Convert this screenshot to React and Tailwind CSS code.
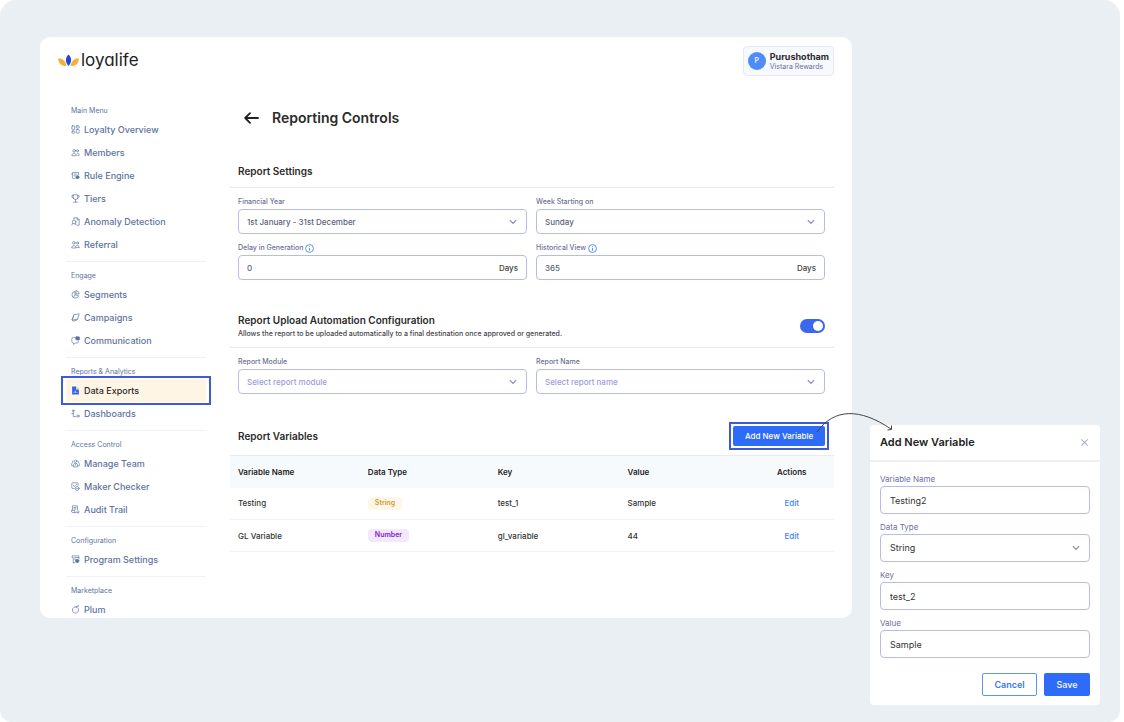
import { useState } from "react";

const ICONS = {
  overview: (
    <>
      <rect x="1.5" y="1.5" width="5" height="7" rx="1" />
      <rect x="9.5" y="1.5" width="5" height="4" rx="1" />
      <rect x="1.5" y="11" width="5" height="3.5" rx="1" />
      <rect x="9.5" y="8" width="5" height="6.5" rx="1" />
    </>
  ),
  members: (
    <>
      <circle cx="5.5" cy="5" r="2.3" />
      <circle cx="11.5" cy="5" r="1.8" />
      <path d="M1.5 13c0-5 8-5 8 0zM11 9.2c2.4-.2 3.5 1.4 3.5 3.8H12" />
    </>
  ),
  rule: (
    <>
      <path d="M7 13.5H4.5a2 2 0 0 1-2-2v-9h11V7M2.5 5.5H1M5.500 5.500h5M5.500 8.500H8" />
      <circle cx="11.5" cy="11" r="2.8" fill="currentColor" />
    </>
  ),
  tiers: (
    <path d="M4 1.5h8V6a4 4 0 0 1-8 0zM4 3H1.500c0 3 1 4.500 3 5M12 3h2.500c0 3-1 4.500-3 5M8 10v4M4.500 14.500h7" />
  ),
  anomaly: (
    <>
      <path d="M5 4V1.500h6L14.500 5v9.500H11M11 1.500V5h3.500" />
      <circle cx="5.5" cy="9" r="3.3" />
      <path d="M3.200 11.500 1 14.500M7 11.500l2 3" />
    </>
  ),
  referral: (
    <>
      <circle cx="5" cy="5" r="2.2" />
      <circle cx="11.5" cy="5.5" r="1.8" />
      <path d="M1.200 13.500c0-5 7.600-5 7.600 0zM9.500 10.500c2-2 5-.5 5 2M10 13.500h4.500" />
    </>
  ),
  segments: (
    <>
      <path d="M7 2.500a6 6 0 1 0 6.500 7.500l-6-1.500z" />
      <path d="M9.500 1.200a5.500 5.500 0 0 1 5 6l-5-.7zM7.500 8.500l-3 4.500" />
    </>
  ),
  campaigns: <path d="M5.500 3 14.500 1.500 11.500 11 3 12.500zM5 5 1.500 12l2 2.500 6.500-1.500 1.500-2" />,
  communication: (
    <>
      <path d="M7 2.500H4.500a3 3 0 0 0-3 3v4a3 3 0 0 0 3 3V15l3-2.500h3a3 3 0 0 0 3-3" />
      <rect x="8.5" y="1.5" width="6.5" height="5.5" rx="1" fill="currentColor" />
    </>
  ),
  dashboards: (
    <>
      <circle cx="4" cy="3" r="1.5" />
      <path d="M4 5v8.500h5M1.500 8H4" />
      <circle cx="12.5" cy="12.5" r="2" />
    </>
  ),
  team: (
    <>
      <circle cx="8" cy="4" r="2.2" />
      <path d="M4.500 13.500v-4c0-2.500 7-2.500 7 0v4zM4 3.500C2.500 3.500 2 5 3 6.200 1 7 1 9 1.200 12H3M12 3.500c1.500 0 2 1.500 1 2.700 2 .8 2 2.800 1.800 5.800H13M8 9v2.500" />
    </>
  ),
  maker: (
    <>
      <path d="M5.500 11.500h-3a1 1 0 0 1-1-1v-8a1 1 0 0 1 1-1h9a1 1 0 0 1 1 1V6M4 6l2 2 4-4" />
      <circle cx="11" cy="11.5" r="3.5" />
      <path d="m9.500 11.500 1.200 1.200 2-2.200" />
    </>
  ),
  audit: (
    <path d="M2.500 9V1.500h9V8M1 9.500h5.500v4H3a2 2 0 0 1-2-2zM6.500 13.500h3M5 4.500h4M5 7h4M10 12l2.500 2.500L15 12M12.500 14V9.500" />
  ),
  settings: (
    <>
      <path d="M4 14V4.500H2v-3h12v3M7 13.500H4.500M6.500 4.500H14V7M6 7.500h2" />
      <circle cx="11" cy="10.5" r="3" fill="currentColor" />
    </>
  ),
  plum: (
    <>
      <path d="M9.500 3.500A5.600 5.600 0 1 0 12.800 6" />
      <path d="M9.500 3.500c.5-1.800 2-2.500 4-2.200-.2 2-1.500 3-4 2.200z" />
    </>
  ),
};

const MENU = [
  {
    title: "Main Menu",
    items: [
      ["Loyalty Overview", "overview"],
      ["Members", "members"],
      ["Rule Engine", "rule"],
      ["Tiers", "tiers"],
      ["Anomaly Detection", "anomaly"],
      ["Referral", "referral"],
    ],
  },
  {
    title: "Engage",
    items: [
      ["Segments", "segments"],
      ["Campaigns", "campaigns"],
      ["Communication", "communication"],
    ],
  },
  {
    title: "Reports & Analytics",
    items: [
      ["Data Exports", "exports"],
      ["Dashboards", "dashboards"],
    ],
  },
  {
    title: "Access Control",
    items: [
      ["Manage Team", "team"],
      ["Maker Checker", "maker"],
      ["Audit Trail", "audit"],
    ],
  },
  { title: "Configuration", items: [["Program Settings", "settings"]] },
  { title: "Marketplace", items: [["Plum", "plum"]] },
];

const VARIABLES = [
  { name: "Testing", type: "String", key: "test_1", value: "Sample" },
  { name: "GL Variable", type: "Number", key: "gl_variable", value: "44" },
];

const ACTIVE = "Data Exports";

function MenuIcon({ name }) {
  if (name === "exports") {
    return (
      <svg viewBox="0 0 16 16" className="size-[9px] shrink-0" aria-hidden="true">
        <path d="M2 1h7v5h5v9H2z" fill="#2f62f0" />
        <path d="M10 1l4 4h-4z" fill="#f5b544" />
        <path d="M5.500 12.500v-3M8 12.500V8M10.500 12.500v-2" stroke="#fff" />
      </svg>
    );
  }
  return (
    <svg
      viewBox="0 0 16 16"
      className="size-[9px] shrink-0"
      fill="none"
      stroke="currentColor"
      strokeWidth="1.2"
      strokeLinecap="round"
      strokeLinejoin="round"
      aria-hidden="true"
    >
      {ICONS[name]}
    </svg>
  );
}

function Logo() {
  return (
    <div className="flex items-center gap-0.5">
      <svg viewBox="0 0 42 26" className="h-[13px] w-[21px]" aria-hidden="true">
        <path d="M0 9c8-1 15 3 17 15C8 25 1 20 0 9z" fill="#f6b13c" />
        <path d="M42 9c-8-1-15 3-17 15 10 1 16-4 17-15z" fill="#f6b13c" />
        <path d="M21 1c7 7 7 15 0 23-7-8-7-16 0-23z" fill="#2546d2" />
      </svg>
      <span className="text-[17px] leading-5 text-[#222] [font-feature-settings:'cv11']">loyalife</span>
    </div>
  );
}

function Chevron() {
  return (
    <svg
      viewBox="0 0 8 6"
      className="pointer-events-none absolute right-[10px] top-1/2 h-[6px] w-[8px] -translate-y-1/2"
      fill="none"
      stroke="#8d91c4"
      strokeWidth="1.2"
      strokeLinecap="round"
      aria-hidden="true"
    >
      <path d="M1.200 1.500 4 4.300l2.800-2.800" />
    </svg>
  );
}

function InfoIcon() {
  return (
    <svg viewBox="0 0 16 16" className="size-[9px]" fill="none" stroke="#3b82f6" strokeWidth="1.5" aria-hidden="true">
      <circle cx="8" cy="8" r="7" />
      <path d="M8 7v5M8 4v1.500" />
    </svg>
  );
}

function Field({ id, label, info, large, options, placeholder, suffix, value }) {
  const box = `block w-full appearance-none rounded-[4px] border border-[#b9bce2] bg-white outline-none ${
    large ? "h-7 px-[9px] text-[9px] text-[#333]" : "h-[25px] px-2 text-[8px] font-medium"
  } ${placeholder ? "text-[#9a9ddb]" : large ? "" : "text-[#5b5f7d]"}`;

  return (
    <div>
      <label
        htmlFor={id}
        className={`mb-px flex h-3 items-center gap-0.5 ${
          large ? "text-[8px] text-[#6c6fa5]" : "text-[7px] font-medium text-[#6d7092]"
        }`}
      >
        {label}
        {info && <InfoIcon />}
      </label>
      <div className="relative">
        {options ? (
          <>
            <select id={id} className={box}>
              {options.map((o) => (
                <option key={o}>{o}</option>
              ))}
            </select>
            <Chevron />
          </>
        ) : (
          <input id={id} type="text" defaultValue={value} className={box} />
        )}
        {suffix && (
          <span className="pointer-events-none absolute inset-y-0 right-[9px] flex items-center text-[8px] font-medium text-[#444]">
            {suffix}
          </span>
        )}
      </div>
    </div>
  );
}

function Sidebar() {
  return (
    <nav className="-mb-[3px] ml-[26px] w-[140px] shrink-0 pt-[29px] text-[#5e73a0]">
      {MENU.map((section) => (
        <section key={section.title} className="border-b border-[#eff1f5] pb-[5px] pt-2 first:pt-0 last:border-0 last:pb-0">
          <h3 className="flex h-[13px] items-center pl-[5px] text-[7px]">{section.title}</h3>
          <ul>
            {section.items.map(([label, icon]) => (
              <li key={label} className="relative">
                <a
                  href="#"
                  className={`flex h-[23px] items-center gap-1 pl-[5px] text-[9px] font-medium ${
                    label === ACTIVE ? "bg-[#fff5e5] text-[#2b2b2b]" : ""
                  }`}
                >
                  <MenuIcon name={icon} />
                  {label}
                </a>
                {label === ACTIVE && (
                  <span className="pointer-events-none absolute -inset-x-[5px] -inset-y-[3px] border-2 border-[#3d5ad9]" />
                )}
              </li>
            ))}
          </ul>
        </section>
      ))}
    </nav>
  );
}

function VariablesTable() {
  return (
    <table className="w-full table-fixed text-left text-[8px] font-medium text-[#333]">
      <thead className="bg-[#f6fafd]">
        <tr className="h-8 border-t border-[#e6ebf1] text-[#222]">
          <th className="w-[21.5%] px-2 font-semibold">Variable Name</th>
          <th className="w-[21.5%] px-2 font-semibold">Data Type</th>
          <th className="w-[21.5%] px-2 font-semibold">Key</th>
          <th className="w-[21.5%] px-2 font-semibold">Value</th>
          <th className="text-center font-semibold">Actions</th>
        </tr>
      </thead>
      <tbody>
        {VARIABLES.map((v) => (
          <tr key={v.key} className="h-8 border-b border-[#eff3f8]">
            <td className="px-2">{v.name}</td>
            <td className="px-2">
              <span
                className={`flex h-[13px] w-fit items-center rounded-[4px] px-[7px] text-[7px] font-semibold ${
                  v.type === "String" ? "bg-[#fef6e6] text-[#d09a34]" : "bg-[#f3e8ff] text-[#7e22ce]"
                }`}
              >
                {v.type}
              </span>
            </td>
            <td className="px-2">{v.key}</td>
            <td className="px-2">{v.value}</td>
            <td className="text-center">
              <a href="#" className="text-[#3b82f6]">
                Edit
              </a>
            </td>
          </tr>
        ))}
      </tbody>
    </table>
  );
}

function AddVariableDialog() {
  return (
    <div className="relative w-[230px] shrink-0 self-end">
      <form className="rounded-[4px] bg-white">
        <div className="flex h-[37px] items-center justify-between border-b-2 border-[#eff0f6] px-[10px]">
          <h2 className="text-[11px] font-semibold text-[#222]">Add New Variable</h2>
          <button type="button" aria-label="Close" className="mr-px">
            <svg viewBox="0 0 10 10" className="size-[9px]" fill="none" stroke="#a9acdc" strokeWidth="1.2" aria-hidden="true">
              <path d="m1.500 1.500 7 7M8.500 1.500l-7 7" />
            </svg>
          </button>
        </div>
        <div className="flex flex-col gap-[7px] px-[10px] pt-[11px]">
          <Field large id="new-name" label="Variable Name" value="Testing2" />
          <Field large id="new-type" label="Data Type" options={["String", "Number"]} />
          <Field large id="new-key" label="Key" value="test_2" />
          <Field large id="new-value" label="Value" value="Sample" />
        </div>
        <div className="flex justify-end gap-[7px] px-[10px] pb-[9px] pt-[15px] text-[9px] font-medium">
          <button type="button" className="h-[23px] w-[55px] rounded-[2px] border border-[#5b93fb] font-semibold text-[#3b78f6]">
            Cancel
          </button>
          <button type="button" className="h-[23px] w-[46px] rounded-[2px] bg-[#2e6bf8] text-white">
            Save
          </button>
        </div>
      </form>
      {/* connector from the button to this dialog */}
      <svg
        viewBox="0 0 78 22"
        className="pointer-events-none absolute -left-[54px] -top-[13px] h-[22px] w-[78px]"
        fill="none"
        stroke="#444"
        aria-hidden="true"
      >
        <path d="M1 20C18-4 44-4 75 17M75.500 13.500v4l-4 .5" />
      </svg>
    </div>
  );
}

export default function App() {
  const [autoUpload, setAutoUpload] = useState(true);

  return (
    <div className="min-h-screen bg-white pr-1 font-['Inter',sans-serif]">
      <div className="flex min-h-screen items-start gap-[18px] rounded-b-[12px] rounded-t-[16px] bg-[#e9eff2] pb-[17px] pl-10 pr-5 pt-[37px]">
        <div className="min-w-0 flex-1 overflow-hidden rounded-[10px] bg-white">
          <header className="flex items-start justify-between px-[18px] pt-[9px]">
            <div className="pt-1">
              <Logo />
            </div>
            <div className="flex h-[30px] items-center gap-1 rounded-[4px] border border-[#e6e9f5] bg-[#f6f9fd] px-1">
              <span className="flex size-[18px] items-center justify-center rounded-full bg-[#4f8bf9] text-[7px] font-medium text-white">
                P
              </span>
              <div>
                <p className="text-[9px] font-bold leading-[11px] text-[#2b2b2b]">Purushotham</p>
                <p className="text-[7px] leading-[10px] text-[#6c6fa5]">Vistara Rewards</p>
              </div>
            </div>
          </header>

          <div className="flex gap-6">
            <Sidebar />

            <main className="min-w-0 flex-1 pr-[18px] pt-8">
              <div className="flex h-5 items-center gap-[13px] pl-[14px]">
                <button type="button" aria-label="Back">
                  <svg
                    viewBox="0 0 15 12"
                    className="h-3 w-[15px]"
                    fill="none"
                    stroke="#222"
                    strokeWidth="1.8"
                    strokeLinecap="round"
                    strokeLinejoin="round"
                    aria-hidden="true"
                  >
                    <path d="M14 6H1.500M6 1.200 1.200 6 6 10.800" />
                  </svg>
                </button>
                <h1 className="text-[14px] font-semibold leading-[18px] text-[#2b2b2b]">Reporting Controls</h1>
              </div>

              <section className="mt-[35px]">
                <h2 className="border-b border-[#e4e6f2] px-2 pb-2 text-[10px] font-semibold leading-4 text-[#2b2b2b]">
                  Report Settings
                </h2>
                <div className="grid grid-cols-2 gap-x-[9px] gap-y-2 pl-2 pr-[9px] pt-2">
                  <Field id="year" label="Financial Year" options={["1st January - 31st December"]} />
                  <Field id="week" label="Week Starting on" options={["Sunday", "Monday"]} />
                  <Field id="delay" label="Delay in Generation" info value="0" suffix="Days" />
                  <Field id="history" label="Historical View" info value="365" suffix="Days" />
                </div>
              </section>

              <section className="mt-8">
                <div className="flex items-center justify-between border-b border-[#e4e6f2] pb-[7px] pl-2 pr-[9px]">
                  <div>
                    <h2 className="text-[10px] font-semibold leading-4 text-[#2b2b2b]">
                      <label htmlFor="auto-upload">Report Upload Automation Configuration</label>
                    </h2>
                    <p className="text-[7px] font-medium leading-3 text-[#444]">
                      Allows the report to be uploaded automatically to a final destination once approved or generated.
                    </p>
                  </div>
                  <input
                    id="auto-upload"
                    type="checkbox"
                    role="switch"
                    checked={autoUpload}
                    onChange={(e) => setAutoUpload(e.target.checked)}
                    className="flex h-[14px] w-[25px] shrink-0 appearance-none items-center rounded-full bg-gray-300 px-[2px] after:size-[10px] after:rounded-full after:bg-white checked:justify-end checked:bg-[#3b66ee]"
                  />
                </div>
                <div className="grid grid-cols-2 gap-x-[9px] pl-2 pr-[9px] pt-2">
                  <Field id="module" label="Report Module" placeholder options={["Select report module"]} />
                  <Field id="report" label="Report Name" placeholder options={["Select report name"]} />
                </div>
              </section>

              <section className="mt-8">
                <div className="flex h-5 items-center justify-between pl-2 pr-[9px]">
                  <h2 className="text-[10px] font-semibold leading-4 text-[#2b2b2b]">Report Variables</h2>
                  <div className="relative">
                    <button type="button" className="block h-5 w-[92px] rounded-[2px] bg-[#2e6bf8] text-[8px] font-medium text-white">
                      Add New Variable
                    </button>
                    <span className="pointer-events-none absolute -inset-1 border-2 border-[#3d5ad9]" />
                  </div>
                </div>
                <div className="mt-[9px]">
                  <VariablesTable />
                </div>
              </section>
            </main>
          </div>
        </div>

        <AddVariableDialog />
      </div>
    </div>
  );
}
